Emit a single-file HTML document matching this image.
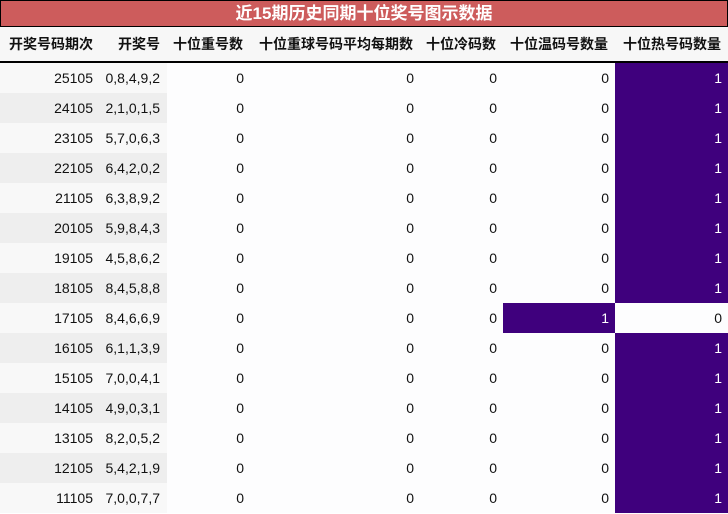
<!DOCTYPE html>
<html><head><meta charset="utf-8"><style>
body{margin:0;width:728px;height:514px;overflow:hidden;background:#fff;font-family:"Liberation Sans","Noto Sans CJK SC",sans-serif;}
.t{position:absolute;left:0;top:0;width:726px;height:25px;background:#cd5c5c;border:1px solid #000;color:#fff;font-weight:bold;font-size:17px;text-align:center;line-height:26px;}
table{position:absolute;left:0;top:27px;width:728px;table-layout:fixed;border-collapse:collapse;font-size:14px;}
th{height:34px;background:#f7f7f7;font-weight:bold;text-align:right;padding:0 7px 0 0;border-bottom:2px solid #000;white-space:nowrap;color:#111;overflow:visible;}
td{height:30px;padding:0 6px 0 0;text-align:right;color:#111;background:#fdfdfe;}
td.g{padding-right:7px}
tr:nth-child(odd) td.g{background:#f8f8f8}
tr:nth-child(even) td.g{background:#eeeeee}
td.p{background:#3f007d;color:#fff}
</style></head><body>
<div class="t">近15期历史同期十位奖号图示数据</div>
<table>
<colgroup><col style="width:100px"><col style="width:67px"><col style="width:83px"><col style="width:170px"><col style="width:83px"><col style="width:112px"><col style="width:113px"></colgroup>
<thead><tr><th>开奖号码期次</th><th>开奖号</th><th>十位重号数</th><th>十位重球号码平均每期数</th><th>十位冷码数</th><th>十位温码号数量</th><th>十位热号码数量</th></tr></thead>
<tbody>
<tr><td class="g">25105</td><td class="g">0,8,4,9,2</td><td>0</td><td>0</td><td>0</td><td>0</td><td class="p">1</td></tr>
<tr><td class="g">24105</td><td class="g">2,1,0,1,5</td><td>0</td><td>0</td><td>0</td><td>0</td><td class="p">1</td></tr>
<tr><td class="g">23105</td><td class="g">5,7,0,6,3</td><td>0</td><td>0</td><td>0</td><td>0</td><td class="p">1</td></tr>
<tr><td class="g">22105</td><td class="g">6,4,2,0,2</td><td>0</td><td>0</td><td>0</td><td>0</td><td class="p">1</td></tr>
<tr><td class="g">21105</td><td class="g">6,3,8,9,2</td><td>0</td><td>0</td><td>0</td><td>0</td><td class="p">1</td></tr>
<tr><td class="g">20105</td><td class="g">5,9,8,4,3</td><td>0</td><td>0</td><td>0</td><td>0</td><td class="p">1</td></tr>
<tr><td class="g">19105</td><td class="g">4,5,8,6,2</td><td>0</td><td>0</td><td>0</td><td>0</td><td class="p">1</td></tr>
<tr><td class="g">18105</td><td class="g">8,4,5,8,8</td><td>0</td><td>0</td><td>0</td><td>0</td><td class="p">1</td></tr>
<tr><td class="g">17105</td><td class="g">8,4,6,6,9</td><td>0</td><td>0</td><td>0</td><td class="p">1</td><td>0</td></tr>
<tr><td class="g">16105</td><td class="g">6,1,1,3,9</td><td>0</td><td>0</td><td>0</td><td>0</td><td class="p">1</td></tr>
<tr><td class="g">15105</td><td class="g">7,0,0,4,1</td><td>0</td><td>0</td><td>0</td><td>0</td><td class="p">1</td></tr>
<tr><td class="g">14105</td><td class="g">4,9,0,3,1</td><td>0</td><td>0</td><td>0</td><td>0</td><td class="p">1</td></tr>
<tr><td class="g">13105</td><td class="g">8,2,0,5,2</td><td>0</td><td>0</td><td>0</td><td>0</td><td class="p">1</td></tr>
<tr><td class="g">12105</td><td class="g">5,4,2,1,9</td><td>0</td><td>0</td><td>0</td><td>0</td><td class="p">1</td></tr>
<tr><td class="g">11105</td><td class="g">7,0,0,7,7</td><td>0</td><td>0</td><td>0</td><td>0</td><td class="p">1</td></tr>
</tbody></table>
</body></html>
